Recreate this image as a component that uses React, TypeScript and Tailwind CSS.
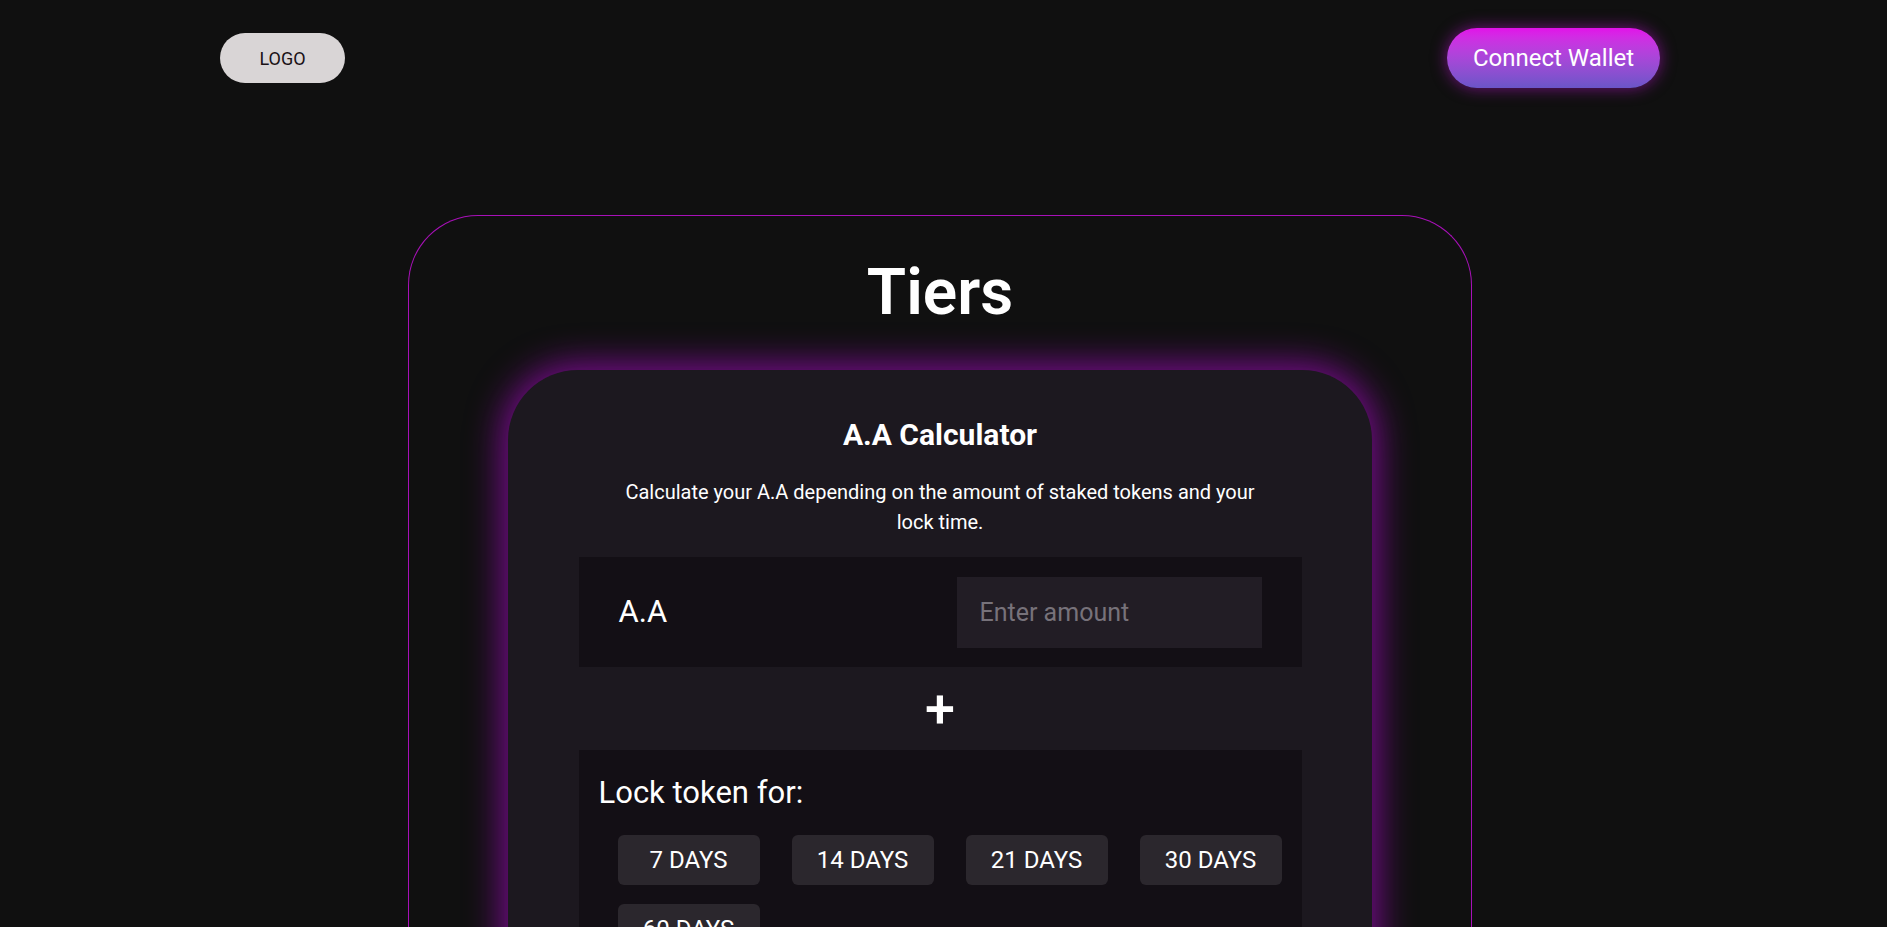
import { useState } from "react";

const DAYS = ["7 DAYS", "14 DAYS", "21 DAYS", "30 DAYS", "60 DAYS"];

export default function App() {
  const [amount, setAmount] = useState("");
  const [days, setDays] = useState<string | null>(null);

  return (
    <div className="min-h-screen bg-[#101010] text-white font-['Roboto',sans-serif] overflow-hidden">
      <header className="ml-[220px] w-[1440px] h-[116px] flex items-center justify-between">
        <button className="w-[125px] h-[50px] rounded-full bg-[#d9d5d6] text-[#1a1216] text-[18px]">LOGO</button>
        <button className="w-[213px] h-[60px] rounded-full bg-gradient-to-b from-[#e20ee9] to-[#6a55c8] text-[24px] text-white shadow-[0_0_16px_rgba(200,20,220,0.55)]">
          Connect Wallet
        </button>
      </header>

      <section className="ml-[408px] mt-[99px] w-[1064px] rounded-t-[70px] border border-b-0 border-[#a810b8] pt-[45px] pb-20">
        <h1 className="text-center text-[64px] leading-none font-semibold mb-[45px]">Tiers</h1>

        <div className="mx-auto w-[864px] rounded-[70px] bg-[#1c181f] shadow-[0_0_35px_6px_rgba(140,10,165,0.85)] pt-[50px] pb-16">
          <h2 className="text-center text-[30px] leading-none font-bold">A.A Calculator</h2>
          <p className="mt-[27px] mx-auto max-w-[650px] text-center text-[20px] leading-[30px]">
            Calculate your A.A depending on the amount of staked tokens and your lock time.
          </p>

          <div className="mt-[20px] mx-auto w-[723px] h-[110px] bg-[#130f15] flex items-center justify-between px-[40px]">
            <span className="text-[31px]">A.A</span>
            <input
              value={amount}
              onChange={(e) => setAmount(e.target.value)}
              placeholder="Enter amount"
              className="w-[305px] h-[71px] bg-[#221d25] pl-[23px] text-[25px] text-white placeholder:text-[#77727a] outline-none"
            />
          </div>

          <div className="h-[83px] flex items-center justify-center">
            <span className="text-[54px] font-medium leading-none">+</span>
          </div>

          <div className="mx-auto w-[723px] bg-[#130f15] pt-[27px] pb-[30px] px-[20px]">
            <h3 className="text-[31px] leading-none">Lock token for:</h3>
            <div className="mt-[27px] ml-[19px] flex flex-wrap gap-x-[32px] gap-y-[19px]">
              {DAYS.map((d) => (
                <button
                  key={d}
                  onClick={() => setDays(d)}
                  className={
                    "w-[142px] h-[50px] rounded-[6px] text-[24px] " +
                    (days === d ? "bg-[#7a1a8c]" : "bg-[#2b272d]")
                  }
                >
                  {d}
                </button>
              ))}
            </div>
          </div>
        </div>
      </section>
    </div>
  );
}
